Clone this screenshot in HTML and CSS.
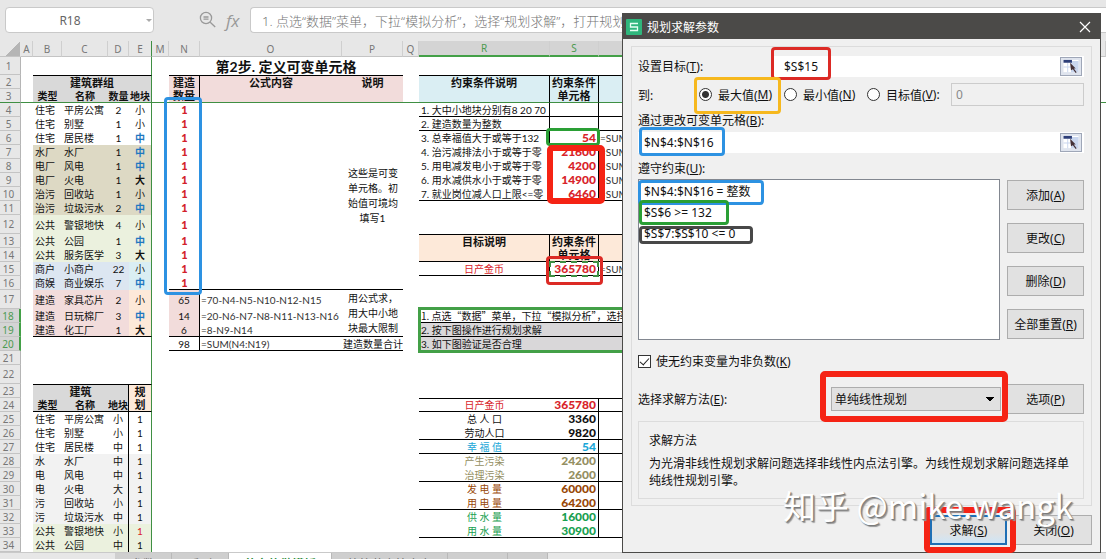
FILE: index.html
```html
<!DOCTYPE html>
<html lang="zh-CN">
<head>
<meta charset="utf-8">
<title>规划求解参数</title>
<link rel="stylesheet" href="styles.css">
</head>
<body>
<main class="app">
<div class="formula-bar">
  <div class="name-box"><input class="name-input" aria-label="名称框" value="R18"><span class="caret"></span></div>
  <svg class="lens" viewBox="0 0 18 18" aria-hidden="true"><circle cx="7" cy="7" r="5.6"/><path d="M4.500 6h5M4.500 8.200h5M11.200 11.200l5 4.800"/></svg>
  <span class="fx">fx</span>
  <div class="formula">1. 点选“数据”菜单，下拉“模拟分析”，选择“规划求解”，打开规划求解</div>
</div>

<div class="sheet">
<table>
<colgroup><col class="w-h"><col class="w-a"><col class="w-b"><col class="w-c"><col class="w-d"><col class="w-e"><col class="w-m"><col class="w-n"><col class="w-o"><col class="w-p"><col class="w-q"><col class="w-r"><col class="w-s"><col class="w-t"><col></colgroup>
<thead><tr><th class="corner"></th><th>A</th><th>B</th><th>C</th><th>D</th><th class="fz">E</th><th>M</th><th>N</th><th>O</th><th>P</th><th>Q</th><th class="on">R</th><th class="on">S</th><th class="on">T</th><th></th></tr></thead>
<tbody>
<tr class="h18"><th>1</th><td></td><td colspan="4" class="fz"></td><td></td><td colspan="3" class="title">第2步. 定义可变单元格</td><td></td><td colspan="4"></td></tr>
<tr class="head"><th>2</th><td></td><td colspan="4" class="fz bt gray">建筑群组</td><td></td><td class="bt br pink">建造</td><td class="bt pink">公式内容</td><td class="bt pink">说明</td><td></td><td class="bt br aqua">约束条件说明</td><td class="bt br aqua">约束条件</td><td class="bt aqua"></td><td></td></tr>
<tr class="head freeze"><th>3</th><td></td><td class="gray s">类型</td><td class="gray s">名称</td><td class="gray s">数量</td><td class="gray fz s">地块</td><td></td><td class="br pink">数量</td><td class="pink"></td><td class="pink"></td><td></td><td class="br aqua"></td><td class="br aqua">单元格</td><td class="aqua"></td><td></td></tr>
<tr><th>4</th><td></td><td>住宅</td><td>平房公寓</td><td class="c">2</td><td class="c fz">小</td><td></td><td class="one">1</td><td></td><td rowspan="13" class="note c bb">这些是可变<br>单元格。初<br>始值可境均<br>填写1</td><td></td><td class="bb br">1. 大中小地块分别有8 20 70</td><td class="bb br"></td><td class="bb"></td><td></td></tr>
<tr><th>5</th><td></td><td>住宅</td><td>别墅</td><td class="c">1</td><td class="c fz">小</td><td></td><td class="one">1</td><td></td><td></td><td class="bb br">2. 建造数量为整数</td><td class="bb br"></td><td class="bb"></td><td></td></tr>
<tr><th>6</th><td></td><td>住宅</td><td>居民楼</td><td class="c">1</td><td class="mid fz">中</td><td></td><td class="one">1</td><td></td><td></td><td class="br">3. 总幸福值大于或等于132</td><td class="num red br">54</td><td class="f">=SUM(</td><td></td></tr>
<tr><th>7</th><td></td><td class="tan">水厂</td><td class="tan">水厂</td><td class="tan c">1</td><td class="tan mid fz">中</td><td></td><td class="one">1</td><td></td><td></td><td class="br">4. 治污减排法小于或等于零</td><td class="num red br">21600</td><td class="f">=SUM(</td><td></td></tr>
<tr><th>8</th><td></td><td class="tan">电厂</td><td class="tan">风电</td><td class="tan c">1</td><td class="tan mid fz">中</td><td></td><td class="one">1</td><td></td><td></td><td class="br">5. 用电减发电小于或等于零</td><td class="num red br">4200</td><td class="f">=SUM(</td><td></td></tr>
<tr><th>9</th><td></td><td class="tan">电厂</td><td class="tan">火电</td><td class="tan c">1</td><td class="tan big fz">大</td><td></td><td class="one">1</td><td></td><td></td><td class="br">6. 用水减供水小于或等于零</td><td class="num red br">14900</td><td class="f">=SUM(</td><td></td></tr>
<tr><th>10</th><td></td><td class="tan">治污</td><td class="tan">回收站</td><td class="tan c">1</td><td class="tan c fz">小</td><td></td><td class="one">1</td><td></td><td></td><td class="bb br">7. 就业岗位减人口上限&lt;=零</td><td class="num red bb br">6460</td><td class="f bb">=SUM(</td><td></td></tr>
<tr><th>11</th><td></td><td class="tan">治污</td><td class="tan">垃圾污水</td><td class="tan c">2</td><td class="tan mid fz">中</td><td></td><td class="one">1</td><td></td><td></td><td colspan="4"></td></tr>
<tr class="h19"><th>12</th><td></td><td class="green">公共</td><td class="green">警银地快</td><td class="green c">4</td><td class="green c fz">小</td><td></td><td class="one">1</td><td></td><td></td><td colspan="4"></td></tr>
<tr><th>13</th><td></td><td class="green">公共</td><td class="green">公园</td><td class="green c">1</td><td class="green mid fz">中</td><td></td><td class="one">1</td><td></td><td></td><td class="hd bt br peach">目标说明</td><td class="hd bt br peach">约束条件</td><td class="bt peach"></td><td></td></tr>
<tr><th>14</th><td></td><td class="green">公共</td><td class="green">服务医学</td><td class="green c">3</td><td class="green big fz">大</td><td></td><td class="one">1</td><td></td><td></td><td class="bb br peach"></td><td class="hd bb br peach">单元格</td><td class="bb peach"></td><td></td></tr>
<tr><th>15</th><td></td><td class="blue">商户</td><td class="blue">小商户</td><td class="blue c">22</td><td class="aqua c fz">小</td><td></td><td class="one">1</td><td></td><td></td><td class="c red bb br">日产金币</td><td class="num red bb br">365780</td><td class="f bb">=SUM(</td><td></td></tr>
<tr><th>16</th><td></td><td class="blue">商娱</td><td class="blue">商业娱乐</td><td class="blue c">7</td><td class="aqua mid fz">中</td><td></td><td class="one bb">1</td><td class="bb"></td><td></td><td colspan="4"></td></tr>
<tr class="h19"><th>17</th><td></td><td class="pink">建造</td><td class="pink">家具芯片</td><td class="pink c">2</td><td class="peach c fz">小</td><td></td><td class="pink c br">65</td><td class="f">=70-N4-N5-N10-N12-N15</td><td rowspan="3" class="note bb">用公式求，<br>用大中小地<br>块最大限制</td><td></td><td colspan="4"></td></tr>
<tr><th class="on">18</th><td></td><td class="pink">建造</td><td class="pink">日玩棉厂</td><td class="pink c">3</td><td class="peach mid fz">中</td><td></td><td class="pink c br">14</td><td class="f">=20-N6-N7-N8-N11-N13-N16</td><td></td><td colspan="3" class="bb cjk">1. 点选“数据”菜单，下拉“模拟分析”，选择</td><td></td></tr>
<tr><th class="on">19</th><td></td><td class="pink bb">建造</td><td class="pink bb">化工厂</td><td class="pink c bb">1</td><td class="peach big bb fz">大</td><td></td><td class="pink c br bb">6</td><td class="f bb">=8-N9-N14</td><td></td><td colspan="3" class="bb sel">2. 按下图操作进行规划求解</td><td></td></tr>
<tr><th class="on">20</th><td></td><td colspan="4" class="fz"></td><td></td><td class="c br bb">98</td><td class="f bb">=SUM(N4:N19)</td><td class="bb sum">建造数量合计</td><td></td><td colspan="3" class="sel">3. 如下图验证是否合理</td><td></td></tr>
<tr><th>21</th><td></td><td colspan="4" class="fz"></td><td colspan="9"></td></tr>
<tr class="h19"><th>22</th><td></td><td colspan="4" class="fz"></td><td colspan="9"></td></tr>
<tr class="head"><th>23</th><td></td><td colspan="3" class="gray bt br">建筑</td><td class="peach bt fz">规</td><td colspan="9"></td></tr>
<tr class="head"><th>24</th><td></td><td class="gray bb s">类型</td><td class="gray bb s">名称</td><td class="gray bb br s">地块</td><td class="peach bb fz">划</td><td colspan="5"></td><td class="plain red bt bb">日产金币</td><td class="num red bt bb br">365780</td><td class="bt bb"></td><td></td></tr>
<tr><th>25</th><td></td><td>住宅</td><td>平房公寓</td><td class="c br">小</td><td class="c fz">1</td><td colspan="5"></td><td class="c">总 人 口</td><td class="num br">3360</td><td></td><td></td></tr>
<tr><th>26</th><td></td><td>住宅</td><td>别墅</td><td class="c br">小</td><td class="c fz">1</td><td colspan="5"></td><td class="c bb">劳动人口</td><td class="num bb br">9820</td><td class="bb"></td><td></td></tr>
<tr><th>27</th><td></td><td>住宅</td><td>居民楼</td><td class="c br">中</td><td class="c fz">1</td><td colspan="5"></td><td class="c cyan bb">幸 福 值</td><td class="num cyan bb br">54</td><td class="bb"></td><td></td></tr>
<tr><th>28</th><td></td><td class="pale">水</td><td class="pale">水厂</td><td class="pale c br">中</td><td class="pale c fz">1</td><td colspan="5"></td><td class="c olive">产生污染</td><td class="num olive br">24200</td><td></td><td></td></tr>
<tr><th>29</th><td></td><td class="pale">电</td><td class="pale">风电</td><td class="pale c br">中</td><td class="pale c fz">1</td><td colspan="5"></td><td class="c olive bb">治理污染</td><td class="num olive bb br">2600</td><td class="bb"></td><td></td></tr>
<tr><th>30</th><td></td><td class="pale">电</td><td class="pale">火电</td><td class="pale c br">大</td><td class="pale c fz">1</td><td colspan="5"></td><td class="c brown">发 电 量</td><td class="num brown br">60000</td><td></td><td></td></tr>
<tr><th>31</th><td></td><td class="pale">污</td><td class="pale">回收站</td><td class="pale c br">小</td><td class="pale c fz">1</td><td colspan="5"></td><td class="c brown bb">用 电 量</td><td class="num brown bb br">64200</td><td class="bb"></td><td></td></tr>
<tr><th>32</th><td></td><td class="pale">污</td><td class="pale">垃圾污水</td><td class="pale c br">中</td><td class="pale c fz">1</td><td colspan="5"></td><td class="c leaf">供 水 量</td><td class="num leaf br">16000</td><td></td><td></td></tr>
<tr><th>33</th><td></td><td class="green">公共</td><td class="green">警银地快</td><td class="green c br">小</td><td class="green c red fz">1</td><td colspan="5"></td><td class="c leaf bb">用 水 量</td><td class="num leaf bb br">30900</td><td class="bb"></td><td></td></tr>
<tr><th>34</th><td></td><td class="green">公共</td><td class="green">公园</td><td class="green c br">中</td><td class="green c fz">1</td><td colspan="9"></td></tr>
</tbody>
</table>
<div class="over selection"></div>
<div class="over ants"></div>
<div class="over mark blue-line m-cells"></div>
<div class="over mark green-line m-s6"></div>
<div class="over mark thick m-s7"></div>
<div class="over mark red-line m-s15"></div>
</div>

<nav class="tabs"><span class="tab-lead"></span><button class="tab t1">参数</button><button class="tab t1">系列</button><button class="tab t2 active">共享款做模板</button><button class="tab t3">简篇草案快方案</button><button class="tab t5">2021</button><button class="tab t4">4</button><button class="tab add">+</button></nav>
</main>

<section class="dialog" role="dialog" aria-labelledby="dlg-title">
<header class="bar"><svg class="logo" viewBox="0 0 16 16" aria-hidden="true"><rect width="16" height="16" rx="1"/><path d="M12 4.500H4.500v3.500h7v3.500H4"/></svg><h1 id="dlg-title">规划求解参数</h1><button class="close" aria-label="关闭窗口"><svg viewBox="0 0 12 12"><path d="M1 1l10 10M11 1L1 11"/></svg></button></header>
<div class="body">
  <div class="group">
    <div class="line target"><label for="goal">设置目标(<u>T</u>):</label><div class="ref"><input id="goal" value="$S$15"><button class="pick" aria-label="选择目标单元格"><svg viewBox="0 0 18 16"><path fill="#fff" d="M1 1h16v13H1z"/><path fill="#c9d6ee" d="M9 2h8v12H9zM1 8h16v1H1zM5 4h1v10H5z"/><path fill="#2d3e78" d="M1 1h9v3H1z"/><path fill="#443036" d="M8 4l6 6-2 0 3 4-1 1-3-4-2 1z"/></svg></button></div></div>
    <div class="line to"><span class="to-label">到:</span><label class="opt o1"><input type="radio" name="to" checked>最大值(<u>M</u>)</label><label class="opt o2"><input type="radio" name="to">最小值(<u>N</u>)</label><label class="opt o3"><input type="radio" name="to">目标值(<u>V</u>):</label><input class="val" aria-label="目标值" value="0" disabled></div>
    <label class="cap" for="vars">通过更改可变单元格(<u>B</u>):</label>
    <div class="ref vars"><input id="vars" value="$N$4:$N$16"><button class="pick" aria-label="选择可变单元格"><svg viewBox="0 0 18 16"><path fill="#fff" d="M1 1h16v13H1z"/><path fill="#c9d6ee" d="M9 2h8v12H9zM1 8h16v1H1zM5 4h1v10H5z"/><path fill="#2d3e78" d="M1 1h9v3H1z"/><path fill="#443036" d="M8 4l6 6-2 0 3 4-1 1-3-4-2 1z"/></svg></button></div>
    <span class="cap cap2">遵守约束(<u>U</u>):</span>
    <div class="split">
      <ul class="list"><li>$N$4:$N$16 = 整数</li><li>$S$6 &gt;= 132</li><li>$S$7:$S$10 &lt;= 0</li></ul>
      <div class="side"><button class="btn">添加(<u>A</u>)</button><button class="btn">更改(<u>C</u>)</button><button class="btn">删除(<u>D</u>)</button><button class="btn">全部重置(<u>R</u>)</button></div>
    </div>
    <label class="check"><input type="checkbox" checked>使无约束变量为非负数(<u>K</u>)</label>
    <div class="line method"><label for="method">选择求解方法(<u>E</u>):</label><select id="method"><option>单纯线性规划</option></select><button class="btn">选项(<u>P</u>)</button></div>
    <div class="help"><h2>求解方法</h2><p>为光滑非线性规划求解问题选择非线性内点法引擎。为线性规划求解问题选择单纯线性规划引擎。</p></div>
  </div>
  <footer class="actions"><button class="btn primary">求解(<u>S</u>)</button><button class="btn">关闭(<u>O</u>)</button></footer>
</div>
<div class="over mark red-line d-goal"></div>
<div class="over mark gold-line d-max"></div>
<div class="over mark blue-line d-vars"></div>
<div class="over mark blue-line d-c1"></div>
<div class="over mark green-line d-c2"></div>
<div class="over mark dark-line d-c3"></div>
<div class="over mark thick d-method"></div>
<div class="over mark thick d-solve"></div>
<div class="over watermark">知乎 @mike.wangk</div>
</section>
</body>
</html>
```
FILE: styles.css
```css
* { box-sizing: border-box; }
body { margin: 0; height: 100vh; overflow: hidden; background: #e7e7e7; color: #111; font-family: "Noto Sans", "Noto Sans CJK SC", sans-serif; font-size: 12px; }
button, input, select { font: inherit; color: inherit; }
.app { display: flex; flex-direction: column; }

.formula-bar { display: flex; align-items: center; height: 41px; padding: 7px 0 8px 5px; background: #e7e7e7; color: #777; }
.name-box { display: flex; align-items: center; width: 149px; height: 26px; background: #fff; border: 1px solid #c9c9c9; border-radius: 4px; }
.name-input { flex: 1; min-width: 0; border: 0; background: none; text-align: center; padding: 0 12px 0 0; color: #666; }
.caret { border: 3px solid transparent; border-top: 3px solid #aaa; border-bottom: 0; margin-right: 1px; }
.lens { width: 18px; height: 18px; margin-left: 45px; fill: none; stroke: #999; stroke-width: 1.3; }
.fx { width: 33px; padding-left: 9px; font: italic 17px "Open Sans", sans-serif; color: #999; }
.formula { flex: 1; height: 26px; padding-left: 11px; line-height: 27px; font-size: 13px; font-weight: 300; white-space: nowrap; overflow: hidden; background: #fff; border: 1px solid #c9c9c9; border-right: 0; border-radius: 4px 0 0 4px; }

.sheet { position: relative; background: #fff; }
table { width: 100%; table-layout: fixed; border-collapse: separate; border-spacing: 0; font-family: Lato, "Noto Sans CJK SC", sans-serif; font-size: 10px; line-height: 12px; }
.w-h { width: 21px; } .w-a { width: 12px; } .w-b { width: 29px; } .w-c { width: 46px; }
.w-d { width: 21px; } .w-e { width: 23px; } .w-m { width: 17px; } .w-n { width: 31px; }
.w-o { width: 142px; } .w-p { width: 61px; } .w-q { width: 16px; } .w-r { width: 131px; }
.w-s { width: 49px; } .w-t { width: 90px; }
tr { height: 14px; }
thead tr { height: 16px; }
.h18 { height: 18px; }
.h19 { height: 19px; }
td, th { padding: 0 2px; white-space: nowrap; overflow: hidden; vertical-align: middle; text-align: left; }
th { padding: 0; text-align: center; font-family: "Noto Sans", sans-serif; font-weight: 400; color: #777; background: #e7e7e7; }
thead th { border-right: 1px solid #cfcfcf; border-bottom: 1px solid #c4c4c4; line-height: 14px; }
tbody th { border-right: 1px solid #b5b5b5; border-bottom: 1px solid #c4c4c4; padding-right: 3px; }
th.on { color: #4c9a50; background: #d4d4d4; }
thead th.on { border-bottom: 2px solid #43a047; }
tbody th.on { border-right: 2px solid #43a047; }
thead .corner { border-right-color: #e7e7e7; background: linear-gradient(135deg, #e7e7e7 60%, #b5b5b5 60%); }
th.fz, td.fz { border-right: 1px solid #3f8f43; }
.bt { border-top: 1px solid #000; }
.bb { border-bottom: 1px solid #000; }
.br { border-right: 1px solid #000; }
.freeze td, .freeze th { border-bottom: 1px solid #3f8f43; }
.c, .mid, .big, .one { text-align: center; }
.mid { color: #1f78c0; font-weight: 700; }
.big { font-weight: 700; }
.one { color: #d2202a; font-weight: 900; font-size: 11px; }
.head td, td.hd { text-align: center; font-weight: 700; font-size: 11px; }
.head td.s { font-size: 10px; padding: 0; }
.head td.plain { font-weight: 400; font-size: 10px; }
.title { font-size: 14px; line-height: 17px; font-weight: 700; text-align: center; }
.note { line-height: 15px; padding: 0 6px; }
.sum { text-align: right; padding: 0; }
.cjk { font-family: "Noto Sans CJK SC", sans-serif; }
td.num, .head td.num { text-align: right; padding: 0 2px; font-size: 12px; font-weight: 900; }
.f { color: #333; padding: 0 1px; }
.gray { background: #d9d9d9; } .pink { background: #f2dcdb; } .aqua { background: #daeef3; }
.tan { background: #ddd9c4; } .green { background: #ebf1de; } .blue { background: #dce6f1; }
.peach { background: #fde9d9; } .pale { background: #f2f2f2; } .sel { background: #d9d7d9; }
.red { color: #d8232a; } .cyan { color: #1ba7d8; } .olive { color: #948f62; } .brown { color: #984807; } .leaf { color: #18a050; }

.over { position: absolute; pointer-events: none; }
.selection { left: 418px; right: 415px; top: 266px; height: 46px; border: 3px solid #43a047; }
.ants { left: 549px; top: 220px; width: 50px; height: 16px; border: 2px dashed #3f8f43; }
.mark { border: 3px solid; border-radius: 4px; }
.blue-line { border-color: #2d92e2; } .green-line { border-color: #2a9f35; } .red-line { border-color: #dc2a25; }
.gold-line { border-color: #f6b81e; } .dark-line { border-color: #484848; }
.thick { border: 6px solid #f52314; border-radius: 5px; }
.m-cells { left: 164px; top: 56px; width: 38px; height: 198px; }
.m-s6 { left: 546px; top: 87px; width: 54px; height: 18px; }
.m-s7 { left: 547px; top: 104px; width: 58px; height: 59px; }
.m-s15 { left: 546px; top: 215px; width: 57px; height: 29px; }

.tabs { display: flex; height: 24px; background: #e7e7e7; border-top: 1px solid #c9c9c9; overflow: hidden; }
.tab-lead { width: 115px; }
.tab { padding: 0; line-height: 20px; height: 23px; border: 0; border-right: 1px solid #b9b9b9; background: #cfcfcf; color: #666; white-space: nowrap; }
.t1 { width: 57px; } .t2 { width: 103px; } .t3 { width: 116px; } .t4 { width: 40px; } .t5 { width: 60px; }
.tab.active { background: #fff; color: #2e8b3a; font-weight: 700; }
.tab.add { background: none; border: 0; width: 22px; }

.dialog { position: absolute; left: 622px; right: 5px; top: 13px; background: #f0f0f0; border: 1px solid #4b4a48; }
.bar { display: flex; align-items: center; height: 25px; padding: 0 9px 0 3px; background: #4b4a48; color: #fff; }
.logo { width: 16px; height: 16px; fill: #2fb67c; }
.logo path { fill: none; stroke: #e6fff2; stroke-width: 1.3; }
.bar h1 { flex: 1; margin: 0 0 0 5px; font-size: 12px; font-weight: 400; }
.close { width: 12px; height: 12px; padding: 0; border: 0; background: none; }
.close svg { display: block; width: 12px; height: 12px; stroke: #fff; stroke-width: 1.2; }
.body { padding: 7px 8px; }
.group { border: 1px solid #dcdcdc; padding: 8px 7px 6px 6px; }
.line { display: flex; align-items: center; }
.target { height: 22px; }
.target label { width: 135px; }
.ref { flex: 1; display: flex; align-items: center; height: 21px; padding-right: 2px; background: #fff; }
.ref input { flex: 1; min-width: 0; border: 0; background: none; padding: 0 0 0 11px; outline: 0; }
.pick { width: 22px; height: 19px; padding: 1px; border: 1px solid #9fa7b8; background: #dfe4ee; }
.pick svg { display: block; width: 18px; height: 15px; }
.to { height: 23px; margin-top: 6px; }
.to-label { width: 61px; }
.opt { display: flex; align-items: center; white-space: pre; }
.opt input { appearance: none; width: 13px; height: 13px; margin: 0 6px 0 0; border: 1px solid #333; border-radius: 50%; background: #fff; }
.opt input:checked { background: radial-gradient(#333 3px, #fff 4px); }
.o1 { width: 85px; }
.o2 { width: 83px; }
.o3 { width: 84px; }
.val { flex: 1; min-width: 0; height: 23px; border: 1px solid #ccc; background: #f0f0f0; color: #888; padding: 0 4px; }
.cap { display: block; height: 18px; line-height: 18px; margin-top: 6px; }
.vars { margin-top: 2px; }
.ref.vars input { padding-left: 6px; }
.cap2 { margin-top: 7px; }
.split { display: flex; gap: 7px; margin-top: 1px; }
.list { flex: 1; margin: 0; padding: 1px 5px; list-style: none; background: #fff; border: 1px solid #828790; }
.list li { line-height: 21px; }
.side { display: flex; flex-direction: column; gap: 13px; padding: 1px 0; }
.btn { width: 77px; height: 30px; padding: 0; border: 1px solid #adadad; background: #e1e1e1; }
.check { display: flex; align-items: center; height: 18px; margin-top: 12px; }
.check input { appearance: none; width: 13px; height: 13px; margin: 0 5px 0 0; border: 1px solid #333; background: #fff; position: relative; }
.check input::after { content: ""; position: absolute; left: 3px; top: 0; width: 4px; height: 8px; border: solid #222; border-width: 0 1px 1px 0; transform: rotate(42deg); }
.method { margin-top: 14px; }
.method label { flex: 1; }
.method select { appearance: none; width: 170px; height: 24px; padding: 0 3px; margin-right: 6px; border: 1px solid #adadad; border-radius: 0; background: linear-gradient(to top right, transparent 50%, #000 50%) 154px 9px / 4px 4px no-repeat, linear-gradient(to top left, transparent 50%, #000 50%) 158px 9px / 4px 4px no-repeat, #e1e1e1; }
.help { margin-top: 7px; padding: 10px 10px 9px; border: 1px solid #dcdcdc; }
.help h2 { margin: 0 0 6px; font-size: 12px; line-height: 17px; font-weight: 400; }
.help p { margin: 0; line-height: 17px; }
.actions { display: flex; justify-content: flex-end; gap: 8px; margin-top: 9px; }
.primary { border: 2px solid #1f6fb5; background: linear-gradient(#e1e1e1 60%, #cfe6f7); }
.d-goal { left: 148px; top: 33px; width: 60px; height: 33px; }
.d-max { left: 71px; top: 63px; width: 87px; height: 37px; }
.d-vars { left: 16px; top: 113px; width: 86px; height: 29px; }
.d-c1 { left: 15px; top: 166px; width: 126px; height: 25px; }
.d-c2 { left: 16px; top: 186px; width: 90px; height: 25px; }
.d-c3 { left: 16px; top: 212px; width: 114px; height: 18px; }
.d-method { left: 197px; top: 357px; width: 188px; height: 51px; }
.d-solve { left: 301px; top: 493px; width: 92px; height: 46px; }
.watermark { left: 160px; top: 467px; font: 33px/48px "Noto Sans CJK SC", sans-serif; color: #fff; text-shadow: 1px 1px 1px #777, 2px 2px 1px #999; white-space: nowrap; }
```
